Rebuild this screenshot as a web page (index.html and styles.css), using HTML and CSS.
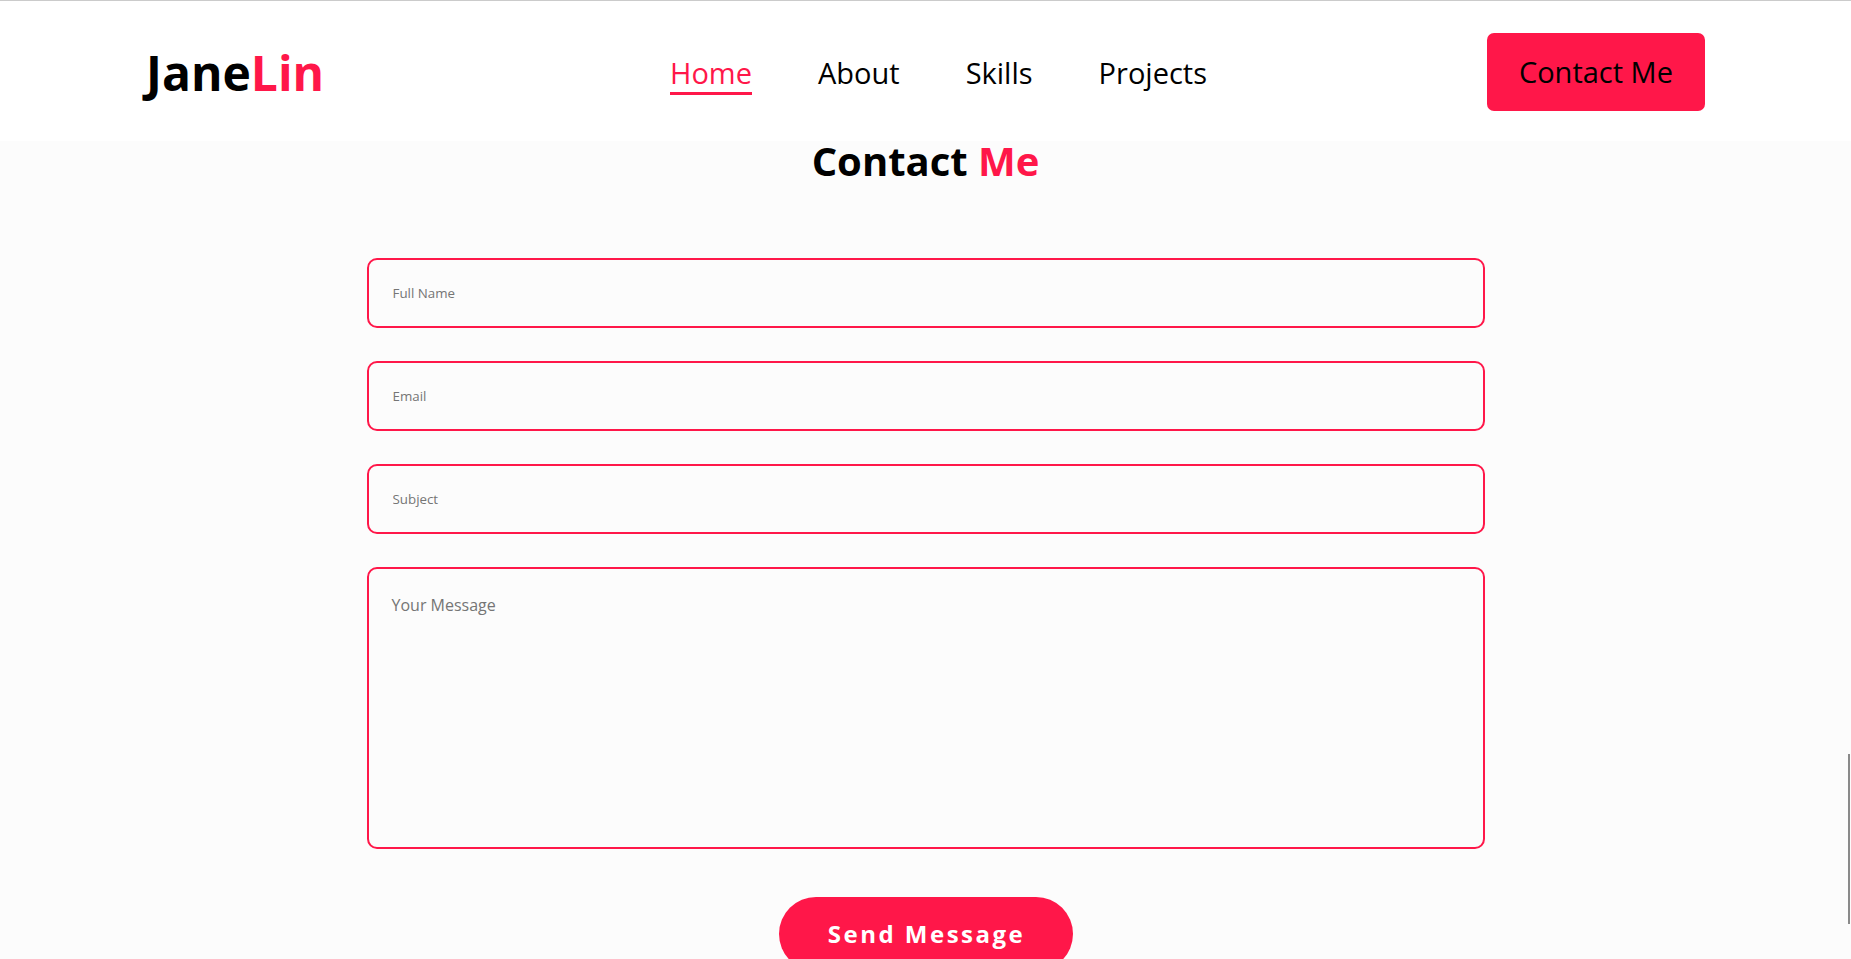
FILE: index.html
```html
<!DOCTYPE html>
<html lang="en">
<head>
<meta charset="utf-8">
<title>Jane Lin - Contact</title>
<link rel="stylesheet" href="styles.css">
</head>
<body>
<header class="site-header">
  <a class="logo" href="#">Jane<span class="accent">Lin</span></a>
  <nav class="nav">
    <a class="nav-link active" href="#">Home</a>
    <a class="nav-link" href="#">About</a>
    <a class="nav-link" href="#">Skills</a>
    <a class="nav-link" href="#">Projects</a>
  </nav>
  <a class="header-btn" href="#">Contact Me</a>
</header>
<main class="contact">
  <h2 class="contact-title">Contact <span class="accent">Me</span></h2>
  <form class="contact-form">
    <input class="field" type="text" placeholder="Full Name">
    <input class="field" type="email" placeholder="Email">
    <input class="field" type="text" placeholder="Subject">
    <textarea class="field field-message" placeholder="Your Message"></textarea>
    <button class="send-btn" type="button">Send Message</button>
  </form>
</main>
<div class="scroll-thumb"></div>
</body>
</html>
```

FILE: styles.css
```css
html, body {
  margin: 0;
  padding: 0;
  height: 100%;
  overflow: hidden;
}
body {
  background: #fcfcfc;
  font-family: "Open Sans", "Noto Sans", sans-serif;
  color: #000;
}
a { text-decoration: none; color: inherit; }
.accent { color: #ff1749; }

.site-header {
  height: 140px;
  border-top: 1px solid #cbcbcb;
  background: #fff;
  display: flex;
  align-items: center;
  justify-content: space-between;
  padding: 0 146px;
}
.logo {
  font-size: 48px;
  font-weight: 700;
  color: #000;
  line-height: 1;
  margin-top: 3px;
}
.nav {
  display: flex;
  align-items: center;
}
.nav-link {
  font-size: 29px;
  margin-left: 66px;
  color: #000;
  border-bottom: 3px solid transparent;
  margin-top: 5px;
}
.nav-link.active {
  color: #ff1749;
  border-bottom-color: #ff1749;
}
.header-btn {
  background: #ff1749;
  color: #000;
  font-size: 29px;
  padding: 20px 32px;
  border-radius: 7px;
  line-height: 38px;
  margin-top: 2px;
}

.contact {
  display: flex;
  flex-direction: column;
  align-items: center;
}
.contact-title {
  margin: 0;
  font-size: 40px;
  line-height: 40px;
  font-weight: 700;
}
.contact-form {
  width: 1118px;
  margin-top: 77px;
  display: flex;
  flex-direction: column;
  gap: 33px;
}
.field {
  box-sizing: border-box;
  height: 70px;
  width: 100%;
  border: 2px solid #ff1749;
  border-radius: 10px;
  background: transparent;
  font-family: "Open Sans", "Noto Sans", sans-serif;
  font-size: 13.33px;
  padding: 0 24px;
  outline: none;
  color: #000;
}
.field::placeholder { color: #757575; }
.field-message {
  height: 282px;
  font-size: 16px;
  padding: 25px 23px;
  resize: none;
}
.send-btn {
  align-self: center;
  margin-top: 15px;
  background: #ff1749;
  color: #fff;
  border: none;
  border-radius: 40px;
  font-family: "Open Sans", "Noto Sans", sans-serif;
  font-size: 24px;
  font-weight: 700;
  letter-spacing: 2.5px;
  line-height: 38px;
  padding: 18px 45px 18px 47px;
  width: 294px;
}
.scroll-thumb {
  position: fixed;
  right: 1px;
  top: 754px;
  width: 2px;
  height: 170px;
  background: #8a8a8a;
}
```
